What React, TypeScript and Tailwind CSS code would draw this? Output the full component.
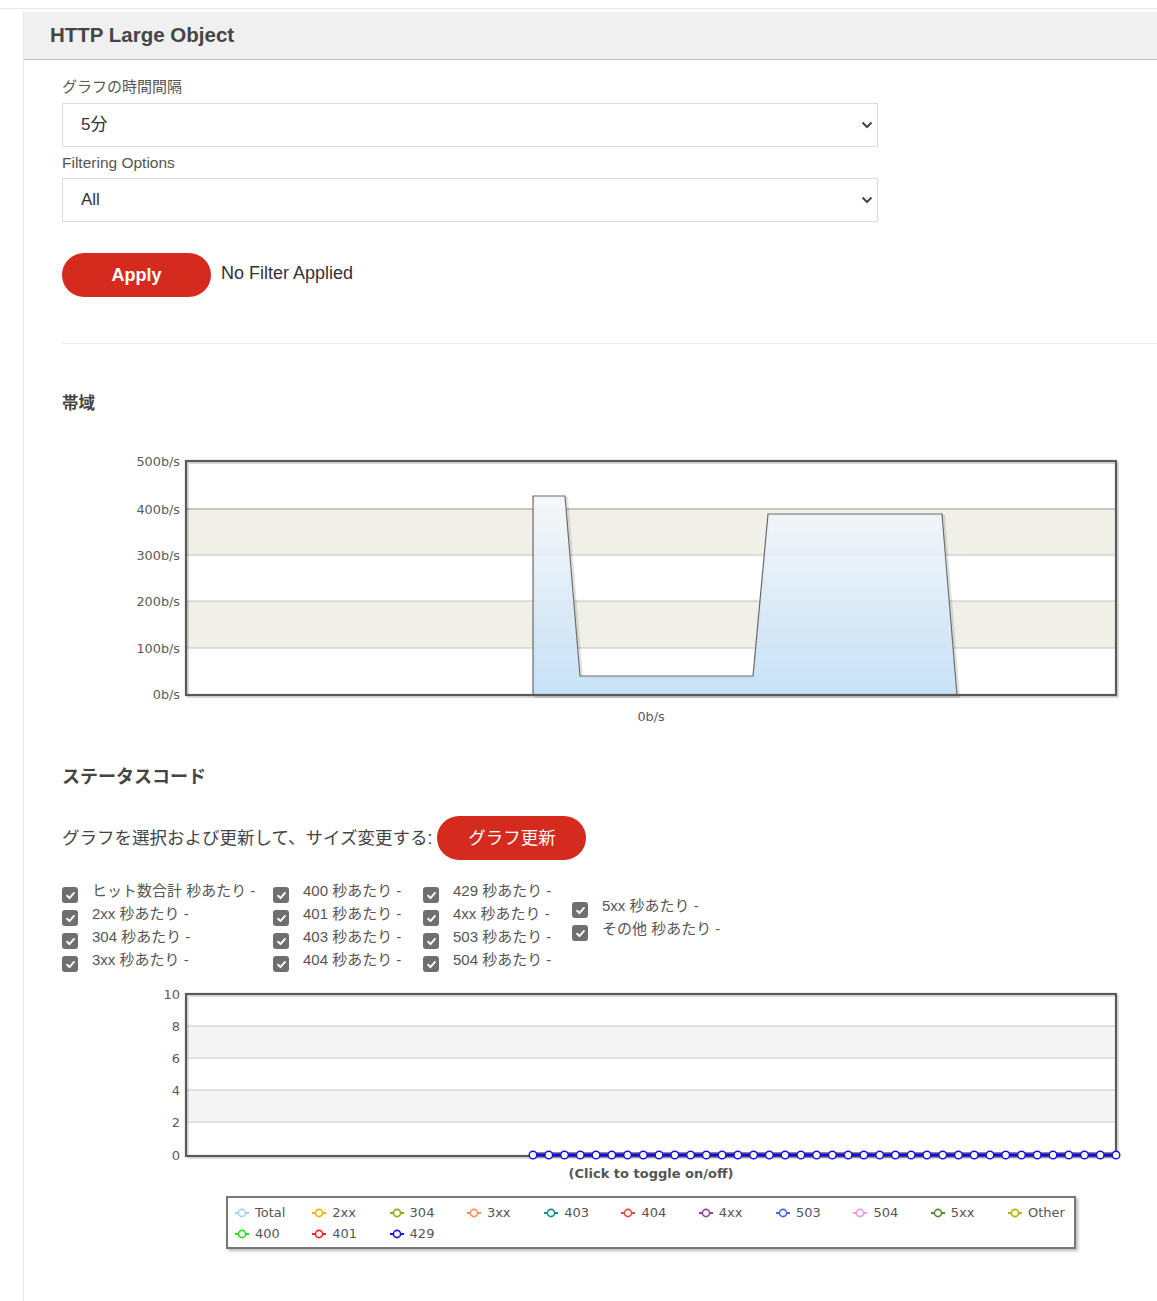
import React from "react";

const uiFont = { fontFamily: '"Liberation Sans", "Noto Sans CJK JP", Arial, sans-serif' };
const chartFont = '"DejaVu Sans", Verdana, "Noto Sans CJK JP", sans-serif';

function Chevron() {
  return (
    <svg
      className="pointer-events-none absolute right-[5px] top-1/2 h-[8px] w-[12px] -translate-y-1/2"
      viewBox="0 0 12 8"
    >
      <path d="M1.5 1.5 L6 6 L10.5 1.5" stroke="#444" strokeWidth="2" fill="none" />
    </svg>
  );
}

function SelectBox({ value }: { value: string }) {
  return (
    <div className="relative w-[816px]">
      <select
        defaultValue={value}
        className="h-[44px] w-full appearance-none border border-[#dedede] bg-white pl-[18px] pr-[30px] text-[17px] text-[#333] outline-none"
        style={uiFont}
      >
        <option>{value}</option>
      </select>
      <Chevron />
    </div>
  );
}

function Check({ label }: { label: string }) {
  return (
    <div className="flex h-[23px] items-start">
      <span className="mt-[6px] flex h-[16px] w-[16px] shrink-0 items-center justify-center rounded-[3px] bg-[#6f6f6f]">
        <svg viewBox="0 0 12 12" className="h-[11px] w-[11px]">
          <path
            d="M2.3 6.3 L4.9 8.9 L9.8 3.2"
            stroke="#fff"
            strokeWidth="2.1"
            fill="none"
            strokeLinecap="round"
            strokeLinejoin="round"
          />
        </svg>
      </span>
      <span className="ml-[14px] mt-[1px] whitespace-nowrap text-[15px] leading-[18px] text-[#555]">{label}</span>
    </div>
  );
}

function BandwidthChart() {
  const yLabels = [
    { t: "500b/s", y: 461 },
    { t: "400b/s", y: 509 },
    { t: "300b/s", y: 555 },
    { t: "200b/s", y: 601 },
    { t: "100b/s", y: 648 },
    { t: "0b/s", y: 694 },
  ];
  const area = "M533 695 L533 496 L565 496 L580 676 L753 676 L768 514 L942 514 L957 695 Z";
  return (
    <svg width="1095" height="280" viewBox="62 450 1095 280" className="block">
      <defs>
        <linearGradient id="bwFill" x1="0" y1="0" x2="0" y2="1">
          <stop offset="0" stopColor="#f6f8fa" />
          <stop offset="1" stopColor="#c3dff6" />
        </linearGradient>
      </defs>
      <rect x="186" y="461" width="930" height="234" fill="#fff" />
      <rect x="186" y="509" width="930" height="46" fill="#f0f0e9" />
      <rect x="186" y="601" width="930" height="47" fill="#f0f0e9" />
      <line x1="186" x2="1116" y1="509" y2="509" stroke="#b4b4ac" strokeWidth="1.5" />
      {[555, 601, 648].map((y) => (
        <line key={y} x1="186" x2="1116" y1={y} y2={y} stroke="#c2c2ba" strokeWidth="1" />
      ))}
      <path d={area} transform="translate(2 2)" fill="none" stroke="#000" strokeOpacity="0.12" strokeWidth="2" />
      <path d={area} fill="url(#bwFill)" fillOpacity="0.92" stroke="#6a6a6a" strokeWidth="1.2" />
      <rect x="188" y="463" width="930" height="234" fill="none" stroke="#000" strokeOpacity="0.15" strokeWidth="2" />
      <rect x="186" y="461" width="930" height="234" fill="none" stroke="#595959" strokeWidth="2.2" />
      {yLabels.map((l) => (
        <text
          key={l.t}
          x="180"
          y={l.y + 4.5}
          textAnchor="end"
          fontSize="12.8"
          fill="#5a5a5a"
          fontFamily={chartFont}
        >
          {l.t}
        </text>
      ))}
      <text x="651" y="721" textAnchor="middle" fontSize="12.8" fill="#5a5a5a" fontFamily={chartFont}>
        0b/s
      </text>
    </svg>
  );
}

function StatusChart() {
  const yLabels = [
    { t: "10", y: 994 },
    { t: "8", y: 1026 },
    { t: "6", y: 1058 },
    { t: "4", y: 1090 },
    { t: "2", y: 1122 },
    { t: "0", y: 1155 },
  ];
  const n = 38;
  const step = (1116 - 533) / (n - 1);
  const pts = Array.from({ length: n }, (_, i) => 533 + i * step);
  return (
    <svg width="1095" height="200" viewBox="62 985 1095 200" className="block">
      <rect x="186" y="994" width="930" height="162" fill="#fff" />
      <rect x="186" y="1026" width="930" height="32" fill="#f5f5f5" />
      <rect x="186" y="1090" width="930" height="32" fill="#f5f5f5" />
      {[1026, 1058, 1090, 1122].map((y) => (
        <line key={y} x1="186" x2="1116" y1={y} y2={y} stroke="#c6c6c6" strokeWidth="1" />
      ))}
      <rect x="188" y="996" width="930" height="162" fill="none" stroke="#000" strokeOpacity="0.12" strokeWidth="2" />
      <rect x="186" y="994" width="930" height="162" fill="none" stroke="#595959" strokeWidth="2.2" />
      <line x1="533" x2="1116" y1="1156.5" y2="1156.5" stroke="#555" strokeWidth="2" />
      <line x1="533" x2="1116" y1="1153.5" y2="1153.5" stroke="#8a4f80" strokeWidth="2.5" />
      <line x1="533" x2="1116" y1="1155" y2="1155" stroke="#0a0af0" strokeWidth="2.6" />
      {pts.map((x, i) => (
        <circle key={i} cx={x} cy="1155" r="3.8" fill="#fff" stroke="#1010f0" strokeWidth="1.4" />
      ))}
      {yLabels.map((l) => (
        <text
          key={l.t}
          x="180"
          y={l.y + 5}
          textAnchor="end"
          fontSize="13"
          fill="#5a5a5a"
          fontFamily={chartFont}
        >
          {l.t}
        </text>
      ))}
      <text
        x="651"
        y="1178"
        textAnchor="middle"
        fontSize="13"
        fontWeight="bold"
        fill="#555"
        fontFamily={chartFont}
      >
        (Click to toggle on/off)
      </text>
    </svg>
  );
}

const legendItems: { label: string; color: string }[] = [
  { label: "Total", color: "#a8d2f2" },
  { label: "2xx", color: "#f2b400" },
  { label: "304", color: "#84b000" },
  { label: "3xx", color: "#ff8c50" },
  { label: "403", color: "#129090" },
  { label: "404", color: "#e04848" },
  { label: "4xx", color: "#94449a" },
  { label: "503", color: "#4466ff" },
  { label: "504", color: "#ff94e0" },
  { label: "5xx", color: "#568a34" },
  { label: "Other", color: "#b4b000" },
  { label: "400", color: "#22e022" },
  { label: "401", color: "#ff2020" },
  { label: "429", color: "#1414e6" },
];

function LegendMarker({ color }: { color: string }) {
  return (
    <svg width="14" height="10" viewBox="0 0 14 10" className="shrink-0">
      <line x1="0" x2="14" y1="5" y2="5" stroke={color} strokeWidth="2" />
      <circle cx="7" cy="5" r="3.6" fill="#fff" stroke={color} strokeWidth="1.6" />
    </svg>
  );
}

function Legend() {
  return (
    <div className="ml-[164px] mt-[11px] h-[53px] w-[850px] border-2 border-[#777] bg-white pl-[7px] pt-[4px] shadow-[2px_2px_3px_rgba(0,0,0,0.28)]">
      <div className="grid grid-cols-[repeat(11,77.3px)]">
        {legendItems.map((it) => (
          <div key={it.label} className="flex h-[21px] items-center gap-[6px]">
            <LegendMarker color={it.color} />
            <span className="text-[13px] text-[#555]" style={{ fontFamily: chartFont }}>
              {it.label}
            </span>
          </div>
        ))}
      </div>
    </div>
  );
}

export default function App() {
  const col1 = ["ヒット数合計 秒あたり -", "2xx 秒あたり -", "304 秒あたり -", "3xx 秒あたり -"];
  const col2 = ["400 秒あたり -", "401 秒あたり -", "403 秒あたり -", "404 秒あたり -"];
  const col3 = ["429 秒あたり -", "4xx 秒あたり -", "503 秒あたり -", "504 秒あたり -"];
  const col4 = ["5xx 秒あたり -", "その他 秒あたり -"];

  return (
    <div className="min-h-[1301px] w-full bg-white pt-2" style={uiFont}>
      <div className="border-t border-[#e9e9e9]" />
      <div className="ml-[23px] mt-[3px] min-h-[1289px] border-l border-[#e6e6e6]">
        <div className="flex h-[48px] items-center border-b border-[#bdbdbd] bg-[#f0f0f0] pl-[26px]">
          <h1 className="text-[20.5px] font-bold text-[#454545]">HTTP Large Object</h1>
        </div>

        <div className="pl-[38px]">
          <div className="mt-[18px] text-[15px] leading-[18px] text-[#555]">グラフの時間間隔</div>
          <div className="mt-[7px]">
            <SelectBox value="5分" />
          </div>
          <div className="mt-[7px] text-[15.5px] leading-[18px] text-[#555]">Filtering Options</div>
          <div className="mt-[6px]">
            <SelectBox value="All" />
          </div>

          <div className="mt-[31px] flex items-center">
            <button className="h-[44px] w-[149px] rounded-full bg-[#d52b1e] text-[18px] font-bold text-white">
              Apply
            </button>
            <span className="ml-[10px] -mt-[4px] text-[18px] text-[#333]">No Filter Applied</span>
          </div>

          <div className="mt-[46px] border-t border-[#ececec]" />

          <h2 className="mt-[49px] text-[16.5px] font-bold leading-[20px] text-[#444]">帯域</h2>
          <div className="mt-[37px]">
            <BandwidthChart />
          </div>

          <h2 className="mt-[36px] text-[18px] font-bold leading-[22px] text-[#444]">ステータスコード</h2>

          <div className="mt-[28px] flex h-[44px] items-center">
            <span className="text-[17.5px] text-[#444]">グラフを選択および更新して、サイズ変更する:</span>
            <button className="ml-[5px] h-[44px] w-[149px] rounded-full bg-[#d52b1e] text-[17.5px] text-white">
              グラフ更新
            </button>
          </div>

          <div className="mt-[21px] flex">
            <div className="w-[211px]">
              {col1.map((l) => (
                <Check key={l} label={l} />
              ))}
            </div>
            <div className="w-[150px]">
              {col2.map((l) => (
                <Check key={l} label={l} />
              ))}
            </div>
            <div className="w-[149px]">
              {col3.map((l) => (
                <Check key={l} label={l} />
              ))}
            </div>
            <div className="mt-[15px]">
              {col4.map((l) => (
                <Check key={l} label={l} />
              ))}
            </div>
          </div>

          <div className="mt-[12px]">
            <StatusChart />
          </div>
          <Legend />
        </div>
      </div>
    </div>
  );
}
